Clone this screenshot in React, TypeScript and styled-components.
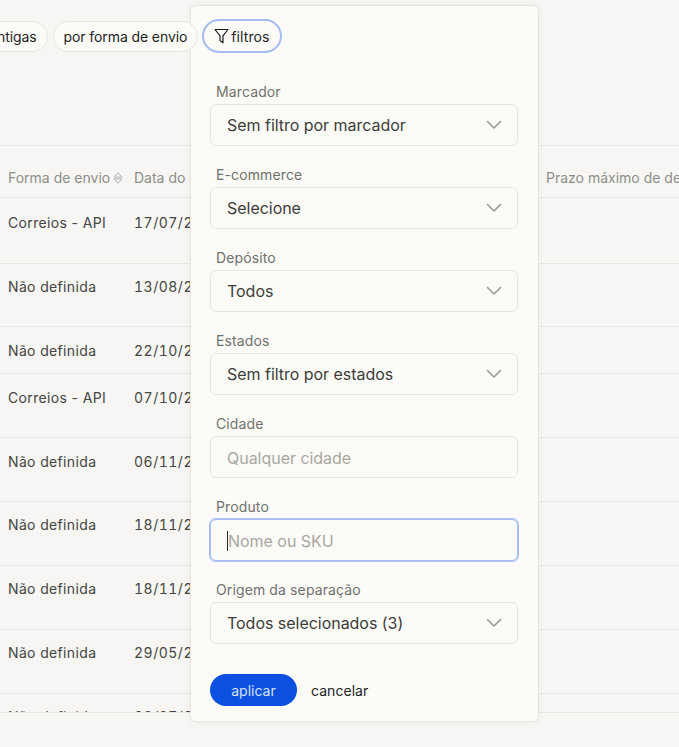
import styled, { createGlobalStyle } from "styled-components";

const rows = [
    { envio: "Correios - API", data: "17/07/2024", height: 66, top: 16 },
    { envio: "Não definida", data: "13/08/2024", height: 63, top: 14 },
    { envio: "Não definida", data: "22/10/2024", height: 47, top: 15 },
    { envio: "Correios - API", data: "07/10/2024", height: 64, top: 15 },
    { envio: "Não definida", data: "06/11/2024", height: 64, top: 15 },
    { envio: "Não definida", data: "18/11/2024", height: 64, top: 14 },
    { envio: "Não definida", data: "18/11/2024", height: 64, top: 14 },
    { envio: "Não definida", data: "29/05/2025", height: 64, top: 14 },
    { envio: "Não definida", data: "03/07/2025", height: 64, top: 14 },
];

const fields = [
    { label: "Marcador", value: "Sem filtro por marcador" },
    { label: "E-commerce", value: "Selecione" },
    { label: "Depósito", value: "Todos" },
    { label: "Estados", value: "Sem filtro por estados" },
];

const Chevron = () => (
    <svg width="16" height="16" viewBox="0 0 16 16" fill="none" stroke="#9a9a96" strokeWidth="1.6" strokeLinecap="round" strokeLinejoin="round">
        <path d="M1.5 4.5 8 11l6.5-6.5" />
    </svg>
);

const SelectField = ({ label, value }: { label: string, value: string }) => (
    <Field>
        <Label>{label}</Label>
        <Select>
            {value}
            <Chevron />
        </Select>
    </Field>
);

export default () => {
    return (
        <Page>
            <GlobalStyle />
            <Toolbar>
                <Pill>mais antigas</Pill>
                <Pill>por forma de envio</Pill>
                <FilterPill>
                    <svg width="15" height="16" viewBox="0 0 15 16" fill="none" stroke="#1f1f1f" strokeWidth="1.2" strokeLinejoin="round">
                        <path d="M1 1.5h13L9 7.8v6.9L6 12.6V7.8z" />
                    </svg>
                    filtros
                </FilterPill>
            </Toolbar>
            <Table>
                <HeadRow>
                    <HeadCell>
                        Forma de envio
                        <SortIcon width="10" height="12" viewBox="0 0 10 12" fill="none" stroke="#b5b4b0" strokeWidth="1" strokeLinejoin="round">
                            <path d="M5 .8 9 5.1H1zM5 11.2 1 6.9h8z" />
                        </SortIcon>
                    </HeadCell>
                    <HeadCell>Data do pedido</HeadCell>
                    <HeadCell>Prazo máximo de despacho</HeadCell>
                </HeadRow>
                {rows.map((row, i) => (
                    <Row key={i} $height={row.height} $top={row.top}>
                        <Cell>{row.envio}</Cell>
                        <DateCell>{row.data}</DateCell>
                    </Row>
                ))}
            </Table>
            <Popover>
                {fields.map((field) => (
                    <SelectField key={field.label} label={field.label} value={field.value} />
                ))}
                <Field>
                    <Label>Cidade</Label>
                    <Input placeholder="Qualquer cidade" />
                </Field>
                <Field>
                    <Label>Produto</Label>
                    <FocusedInput>
                        <Caret />
                        Nome ou SKU
                    </FocusedInput>
                </Field>
                <SelectField label="Origem da separação" value="Todos selecionados (3)" />
                <Actions>
                    <Apply>aplicar</Apply>
                    <Cancel>cancelar</Cancel>
                </Actions>
            </Popover>
        </Page>
    )
}

const GlobalStyle = createGlobalStyle`
    html, body {
        margin: 0;
        padding: 0;
        height: 100%;
        overflow: hidden;
        background: #f7f6f4;
    }
    body {
        font-family: Inter, "Liberation Sans", sans-serif;
        color: #3d3d3b;
    }
`

const Page = styled.div`
    position: relative;
    width: 679px;
    height: 747px;
    overflow: hidden;
    background: #f7f6f4;
`

const Toolbar = styled.div`
    display: flex;
    align-items: center;
    gap: 5px;
    height: 72px;
    margin-left: -56px;
    margin-bottom: 73px;
`

const Pill = styled.div`
    position: relative;
    z-index: 2;
    flex: none;
    display: flex;
    align-items: center;
    height: 31px;
    padding: 0 10px;
    box-sizing: border-box;
    border: 1px solid #e8e6dc;
    border-radius: 16px;
    background: #fcfbf8;
    font-size: 14px;
    letter-spacing: -0.1px;
    color: #1f1f1f;
    white-space: nowrap;
`

const FilterPill = styled(Pill)`
    height: 34px;
    gap: 2px;
    margin-left: -1px;
    padding: 0 10px;
    border: 2px solid #a5bdf0;
    border-radius: 17px;
    letter-spacing: 0.1px;
`

const Table = styled.div`
    height: 568px;
    overflow: hidden;
    border-top: 1px solid #e8e7e2;
    border-bottom: 1px solid #e8e7e2;
    box-sizing: border-box;
`

const HeadRow = styled.div`
    display: grid;
    grid-template-columns: 126px 412px 1fr;
    align-items: start;
    height: 52px;
    padding: 23px 0 0 8px;
    box-sizing: border-box;
    border-bottom: 1px solid #e8e7e2;
`

const HeadCell = styled.div`
    display: flex;
    align-items: center;
    gap: 3px;
    font-size: 14px;
    line-height: 18px;
    color: #8e8e8a;
    white-space: nowrap;
`

const SortIcon = styled.svg`
    flex: none;
`

const Row = styled.div<{ $height: number, $top: number }>`
    display: grid;
    grid-template-columns: 126px 412px 1fr;
    height: ${(p) => p.$height}px;
    padding: ${(p) => p.$top}px 0 0 8px;
    box-sizing: border-box;
    border-bottom: 1px solid #e8e7e2;
`

const Cell = styled.div`
    font-size: 14px;
    line-height: 18px;
    letter-spacing: 0.35px;
    color: #454543;
    white-space: nowrap;
`

const DateCell = styled(Cell)`
    font-variant-numeric: tabular-nums;
    letter-spacing: 0.5px;
`

const Popover = styled.div`
    position: absolute;
    z-index: 1;
    top: 5px;
    left: 190px;
    width: 349px;
    height: 717px;
    padding: 75px 20px 0 19px;
    box-sizing: border-box;
    display: flex;
    flex-direction: column;
    gap: 18px;
    background: #fcfbf8;
    border: 1px solid #e8e6dc;
    border-radius: 6px;
    box-shadow: 0 0 6px rgba(60, 60, 50, 0.06);
`

const Field = styled.div`
    display: flex;
    flex-direction: column;
    gap: 2px;
`

const Label = styled.div`
    padding: 1px 0 0 6px;
    font-size: 14px;
    line-height: 20px;
    letter-spacing: 0.12px;
    color: #71716d;
`

const Select = styled.div`
    display: flex;
    align-items: center;
    justify-content: space-between;
    width: 308px;
    height: 42px;
    padding: 0 15px 0 16px;
    box-sizing: border-box;
    border: 1px solid #e8e6dc;
    border-radius: 6px;
    font-size: 16px;
    letter-spacing: -0.03px;
    color: #3d3d3b;
`

const Input = styled.input`
    width: 308px;
    height: 42px;
    padding: 2px 16px 0;
    box-sizing: border-box;
    border: 1px solid #e8e6dc;
    border-radius: 6px;
    outline: none;
    background: transparent;
    font-family: inherit;
    font-size: 16px;
    letter-spacing: -0.03px;
    &::placeholder {
        color: #a8a7a2;
        opacity: 1;
    }
`

const FocusedInput = styled.div`
    display: flex;
    align-items: center;
    width: 308px;
    height: 42px;
    padding: 2px 16px 0;
    box-sizing: border-box;
    border: 1px solid #a5bdf0;
    border-radius: 6px;
    box-shadow: 0 0 0 1px #a5bdf0;
    font-size: 16px;
    letter-spacing: -0.03px;
    color: #a8a7a2;
`

const Caret = styled.span`
    width: 1px;
    height: 20px;
    background: #2a2a2a;
`

const Actions = styled.div`
    display: flex;
    align-items: center;
    gap: 14px;
    margin-top: 12px;
`

const Apply = styled.div`
    display: flex;
    align-items: center;
    justify-content: center;
    width: 87px;
    height: 32px;
    border-radius: 16px;
    background: #0b50e0;
    font-size: 14px;
    color: #d7e2fb;
`

const Cancel = styled.div`
    font-size: 14px;
    letter-spacing: 0.05px;
    color: #1f1f1f;
`
